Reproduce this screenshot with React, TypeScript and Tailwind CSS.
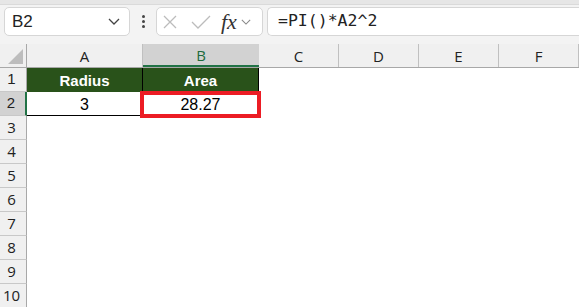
import React from 'react';

const COLS = [
  { key: 'A', w: 'w-[116px]' },
  { key: 'B', w: 'w-[116px]' },
  { key: 'C', w: 'w-[80px]' },
  { key: 'D', w: 'w-[80px]' },
  { key: 'E', w: 'w-[80px]' },
  { key: 'F', w: 'w-[80px]' },
];

const EMPTY_ROWS = [3, 4, 5, 6, 7, 8, 9, 10];

function Chevron({ className }: { className?: string }) {
  return (
    <svg viewBox="0 0 12 7" className={className} fill="none" stroke="currentColor" strokeWidth="1.3">
      <path d="M1 1l5 5 5-5" />
    </svg>
  );
}

function RowHeader({ n, selected }: { n: number; selected?: boolean }) {
  return (
    <div
      className={`w-[27px] h-full shrink-0 flex items-center justify-center pr-[3px] text-[15px] text-[#222] border-b border-[#c8c8c8] ${
        selected ? 'bg-[#d2d2d2] border-r-2 border-r-[#217346] text-[#1e6b3c]' : 'bg-[#f0f0f0] border-r border-r-[#a8a8a8]'
      }`}
    >
      {n}
    </div>
  );
}

export default function App() {
  return (
    <div className="w-[579px] h-[307px] overflow-hidden bg-white flex flex-col" style={{ fontFamily: '"Open Sans", "Noto Sans", sans-serif' }}>
      {/* ribbon edge */}
      <div className="h-[5px] shrink-0 bg-[#e6e6e6] border-b border-[#dadada]" />

      {/* formula bar */}
      <div className="h-[39px] shrink-0 bg-[#f3f3f3] flex items-start pt-[2px]">
        <div className="ml-[4px] w-[126px] h-[29px] bg-white border border-[#d6d6d6] rounded-[5px] flex items-center justify-between pl-[7px] pr-[9px]">
          <span className="text-[17px] text-[#222]" style={{ fontFamily: '"Liberation Sans", sans-serif' }}>B2</span>
          <Chevron className="w-[12px] h-[7px] text-[#444]" />
        </div>
        <div className="w-[26px] h-[29px] flex flex-col items-center justify-center gap-[2px]">
          <span className="w-[3px] h-[3px] bg-[#444] rounded-full" />
          <span className="w-[3px] h-[3px] bg-[#444] rounded-full" />
          <span className="w-[3px] h-[3px] bg-[#444] rounded-full" />
        </div>
        <div className="w-[107px] h-[29px] bg-white border border-[#d6d6d6] rounded-[5px] flex items-center pl-[6px]">
          <svg viewBox="0 0 14 14" className="w-[14px] h-[14px] text-[#bcbcbc]" fill="none" stroke="currentColor" strokeWidth="1.3">
            <path d="M1 1l12 12M13 1L1 13" />
          </svg>
          <svg viewBox="0 0 20 14" className="ml-[14px] w-[20px] h-[14px] text-[#bcbcbc]" fill="none" stroke="currentColor" strokeWidth="1.3">
            <path d="M1 7l6 6L19 1" />
          </svg>
          <span className="ml-[10px] text-[22px] italic leading-none text-[#333]" style={{ fontFamily: '"Liberation Serif", serif' }}>
            fx
          </span>
          <Chevron className="ml-[4px] w-[10px] h-[6px] text-[#888]" />
        </div>
        <div className="ml-[4px] flex-1 h-[29px] bg-white border-y border-l border-[#d6d6d6] rounded-l-[5px] flex items-center pl-[10px]">
          <span className="text-[16.5px] text-[#222]" style={{ fontFamily: '"DejaVu Sans Mono", "Liberation Mono", monospace' }}>
            =PI()*A2^2
          </span>
        </div>
      </div>

      {/* column headers */}
      <div className="h-[24px] shrink-0 flex bg-[#f0f0f0] border-b border-[#a8a8a8]">
        <div className="relative w-[27px] shrink-0 border-r border-[#a8a8a8]">
          <div
            className="absolute right-[3px] bottom-[3px] w-0 h-0 border-l-[15px] border-l-transparent border-b-[15px] border-b-[#bdbdbd]"
          />
        </div>
        {COLS.map(c => (
          <div
            key={c.key}
            className={`${c.w} shrink-0 flex items-center justify-center pt-[2px] text-[15px] ${
              c.key === 'B' ? 'bg-[#d2d2d2] border-b-2 border-[#217346] text-[#1e6b3c]' : 'text-[#222] border-r border-[#c0c0c0]'
            }`}
          >
            {c.key}
          </div>
        ))}
      </div>

      {/* row 1 */}
      <div className="h-[24px] shrink-0 flex" style={{ fontFamily: '"Liberation Sans", sans-serif' }}>
        <RowHeader n={1} />
        <div className="w-[116px] shrink-0 bg-[#29521a] border-r border-black flex items-center justify-center pt-[3px] text-white font-bold text-[15px]">
          Radius
        </div>
        <div className="w-[116px] shrink-0 bg-[#29521a] border-r border-black flex items-center justify-center pt-[3px] text-white font-bold text-[15px]">
          Area
        </div>
      </div>

      {/* row 2 */}
      <div className="h-[24px] shrink-0 flex" style={{ fontFamily: '"Liberation Sans", sans-serif' }}>
        <RowHeader n={2} selected />
        <div className="w-[116px] shrink-0 border-r border-b border-black flex items-center justify-center pt-[3px] text-[16px] text-black">
          3
        </div>
        <div className="relative w-[116px] shrink-0 border-r border-b border-black flex items-center justify-center pt-[3px] text-[16px] text-black">
          28.27
          <div className="absolute -left-[3px] -top-[1px] -right-[3px] -bottom-[3px] border-[4px] border-[#ec1c24]" />
        </div>
      </div>

      {EMPTY_ROWS.map(n => (
        <div key={n} className="h-[24px] shrink-0 flex">
          <RowHeader n={n} />
        </div>
      ))}
    </div>
  );
}
